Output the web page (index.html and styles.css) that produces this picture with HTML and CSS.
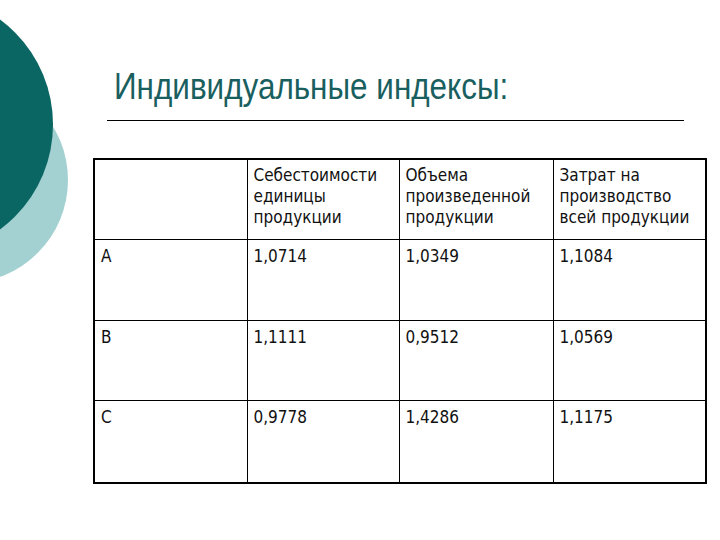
FILE: index.html
```html
<!DOCTYPE html>
<html lang="ru">
<head>
<meta charset="utf-8">
<link rel="stylesheet" href="styles.css">
</head>
<body>
<div class="slide">
  <div class="circle circle-light"></div>
  <div class="circle circle-dark"></div>
  <header class="title-block">
    <h1 class="title">Индивидуальные индексы:</h1>
    <div class="rule"></div>
  </header>
  <table class="data">
    <colgroup>
      <col class="c1"><col class="c2"><col class="c3"><col class="c4">
    </colgroup>
    <tr class="head">
      <td></td>
      <td>Себестоимости единицы продукции</td>
      <td>Объема произведенной продукции</td>
      <td>Затрат на производство всей продукции</td>
    </tr>
    <tr class="row first">
      <td>A</td><td>1,0714</td><td>1,0349</td><td>1,1084</td>
    </tr>
    <tr class="row">
      <td>B</td><td>1,1111</td><td>0,9512</td><td>1,0569</td>
    </tr>
    <tr class="row last">
      <td>C</td><td>0,9778</td><td>1,4286</td><td>1,1175</td>
    </tr>
  </table>
</div>
</body>
</html>
```
FILE: styles.css
```css
html, body {
  margin: 0;
  padding: 0;
  background: #ffffff;
}
.slide {
  position: relative;
  width: 720px;
  height: 540px;
  overflow: hidden;
  padding-top: 64px;
  box-sizing: border-box;
}
.circle {
  position: absolute;
  border-radius: 50%;
}
.circle-light {
  left: -138px;
  top: 77px;
  width: 206px;
  height: 206px;
  background: #a3d0d0;
}
.circle-dark {
  left: -208px;
  top: -6px;
  width: 261px;
  height: 261px;
  background: #0a6663;
}
.title-block {
  margin-left: 107px;
  width: 577px;
}
.title {
  margin: 0 0 0 7px;
  font-family: "Liberation Sans", Arial, sans-serif;
  font-weight: normal;
  font-size: 37px;
  line-height: 46px;
  color: #1a5f5f;
  transform: scaleX(0.85);
  transform-origin: left center;
  white-space: nowrap;
}
.rule {
  margin-top: 10px;
  height: 1px;
  background: #000;
}
.data {
  margin-left: 93px;
  margin-top: 37px;
  width: 612px;
  border-collapse: collapse;
  border: 2px solid #000;
  font-family: "DejaVu Sans Condensed", "DejaVu Sans", sans-serif;
  font-size: 17px;
  line-height: 21px;
  color: #111;
  table-layout: fixed;
}
.c1 { width: 153px; }
.c2 { width: 152px; }
.c3 { width: 154px; }
.c4 { width: 153px; }
.data td {
  border: 1px solid #000;
  vertical-align: top;
  padding: 5px 6px 0 6px;
}
.head td { height: 74px; }
.row td { height: 73px; padding-top: 6px; }
.row.first td { height: 74px; }
.row.last td { height: 75px; }
```
